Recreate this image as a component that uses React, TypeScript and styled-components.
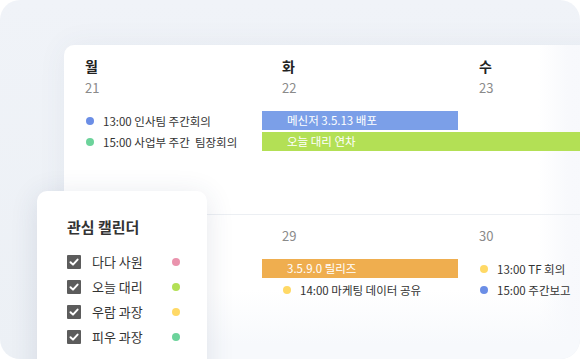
import React from "react";
import styled, { createGlobalStyle } from "styled-components";

const GlobalStyle = createGlobalStyle`
  html, body { margin: 0; padding: 0; background: #ffffff; }
  body { font-family: "Noto Sans CJK KR", "Noto Sans", sans-serif; }
  * { box-sizing: border-box; }
`;

const Frame = styled.div`
  position: relative;
  width: 580px;
  height: 359px;
  border-radius: 20px;
  overflow: hidden;
  background: linear-gradient(180deg, #f0f3f8 0%, #ecf0f5 100%);
  padding: 45px 0 0 64px;
  display: flex;
`;

const Card = styled.div`
  position: relative;
  width: 600px;
  flex-shrink: 0;
  height: 340px;
  border-top-left-radius: 10px;
  box-shadow: 0 0 30px rgba(60, 80, 120, 0.06);
  background:
    linear-gradient(180deg, rgba(247, 249, 252, 0) 72%, rgba(247, 249, 252, 1) 88%),
    linear-gradient(90deg, #ffffff 0%, #ffffff 79%, #f8f9fc 84%, #f5f7fa 100%);
  display: flex;
  flex-direction: column;
`;

const WeekRow = styled.div<{ $top: number; $divider?: boolean }>`
  padding-top: ${(p) => p.$top}px;
  height: ${(p) => (p.$divider ? "auto" : "169px")};
  border-top: ${(p) => (p.$divider ? "1px solid #eceff3" : "none")};
  display: flex;
  flex-direction: column;
`;

const HeaderGrid = styled.div`
  display: grid;
  grid-template-columns: repeat(3, 197px);
`;

const HeadCell = styled.div`
  padding-left: 21px;
  display: flex;
  flex-direction: column;
  min-height: 21px;
`;

const DayName = styled.div`
  font-size: 14px;
  line-height: 21px;
  font-weight: 700;
  color: #222;
`;

const DateNum = styled.div`
  font-size: 13px;
  line-height: 21px;
  color: #8a8a8a;
  font-weight: 400;
`;

const EventGrid = styled.div`
  margin-top: 13px;
  display: grid;
  grid-template-columns: repeat(3, 197px);
  grid-auto-rows: 21px;
`;

const Bar = styled.div<{ $color: string; $col: number; $span: number; $row: number }>`
  grid-column: ${(p) => p.$col} / span ${(p) => p.$span};
  grid-row: ${(p) => p.$row};
  margin-left: 1px;
  height: 19px;
  background: ${(p) => p.$color};
  color: #ffffff;
  font-size: 11.5px;
  line-height: 19px;
  padding-left: 25px;
  white-space: nowrap;
`;

const DotEvent = styled.div<{ $col: number; $row: number }>`
  grid-column: ${(p) => p.$col};
  grid-row: ${(p) => p.$row};
  height: 19px;
  display: flex;
  align-items: center;
  padding-left: 22px;
  gap: 9px;
  font-size: 11.5px;
  color: #333;
  white-space: nowrap;
`;

const Dot = styled.span<{ $color: string }>`
  width: 8px;
  height: 8px;
  border-radius: 50%;
  background: ${(p) => p.$color};
  flex-shrink: 0;
`;

const Popup = styled.div`
  position: absolute;
  left: 37px;
  top: 191px;
  width: 170px;
  height: 200px;
  background: #ffffff;
  border-radius: 10px;
  box-shadow: 0 4px 28px rgba(40, 60, 100, 0.12);
  padding: 26px 0 0 30px;
  z-index: 2;
`;

const PopupTitle = styled.div`
  font-size: 15px;
  font-weight: 700;
  color: #333;
  line-height: 20px;
  margin-bottom: 12px;
`;

const CalList = styled.div`
  display: flex;
  flex-direction: column;
`;

const CalItem = styled.div`
  display: grid;
  grid-template-columns: 14px 1fr 8px;
  align-items: center;
  column-gap: 11px;
  height: 25px;
  width: 113px;
  font-size: 13px;
  color: #333;
`;

const CheckBox = styled.span`
  width: 14px;
  height: 14px;
  border-radius: 1px;
  background: #5c5c5c;
  display: flex;
  align-items: center;
  justify-content: center;
`;

const Check = () => (
  <CheckBox>
    <svg width="14" height="14" viewBox="0 0 14 14">
      <polyline points="3.5,7.2 6,9.6 10.6,4.6" fill="none" stroke="#fff" strokeWidth="2" strokeLinecap="round" strokeLinejoin="round" />
    </svg>
  </CheckBox>
);

const C = {
  blue: "#6b8ee6",
  green: "#6cd39b",
  yellow: "#ffd966",
  pink: "#ea93ad",
  lime: "#b3e055",
  barBlue: "#7b9fe8",
  barLime: "#b3e055",
  barOrange: "#efae4f",
};

const calendars = [
  { name: "다다 사원", color: C.pink },
  { name: "오늘 대리", color: C.lime },
  { name: "우람 과장", color: C.yellow },
  { name: "피우 과장", color: C.green },
];

export default function App() {
  return (
    <>
      <GlobalStyle />
      <Frame>
        <Card>
          <WeekRow $top={11}>
            <HeaderGrid>
              <HeadCell>
                <DayName>월</DayName>
                <DateNum>21</DateNum>
              </HeadCell>
              <HeadCell>
                <DayName>화</DayName>
                <DateNum>22</DateNum>
              </HeadCell>
              <HeadCell>
                <DayName>수</DayName>
                <DateNum>23</DateNum>
              </HeadCell>
            </HeaderGrid>
            <EventGrid>
              <DotEvent $col={1} $row={1}>
                <Dot $color={C.blue} />
                13:00 인사팀 주간회의
              </DotEvent>
              <DotEvent $col={1} $row={2}>
                <Dot $color={C.green} />
                15:00 사업부 주간&nbsp; 팀장회의
              </DotEvent>
              <Bar $color={C.barBlue} $col={2} $span={1} $row={1}>
                메신저 3.5.13 배포
              </Bar>
              <Bar $color={C.barLime} $col={2} $span={2} $row={2}>
                오늘 대리 연차
              </Bar>
            </EventGrid>
          </WeekRow>
          <WeekRow $top={10} $divider>
            <HeaderGrid>
              <HeadCell />
              <HeadCell>
                <DateNum>29</DateNum>
              </HeadCell>
              <HeadCell>
                <DateNum>30</DateNum>
              </HeadCell>
            </HeaderGrid>
            <EventGrid>
              <Bar $color={C.barOrange} $col={2} $span={1} $row={1}>
                3.5.9.0 릴리즈
              </Bar>
              <DotEvent $col={2} $row={2}>
                <Dot $color={C.yellow} />
                14:00 마케팅 데이터 공유
              </DotEvent>
              <DotEvent $col={3} $row={1}>
                <Dot $color={C.yellow} />
                13:00 TF 회의
              </DotEvent>
              <DotEvent $col={3} $row={2}>
                <Dot $color={C.blue} />
                15:00 주간보고
              </DotEvent>
            </EventGrid>
          </WeekRow>
        </Card>
        <Popup>
          <PopupTitle>관심 캘린더</PopupTitle>
          <CalList>
            {calendars.map((c) => (
              <CalItem key={c.name}>
                <Check />
                <span>{c.name}</span>
                <Dot $color={c.color} />
              </CalItem>
            ))}
          </CalList>
        </Popup>
      </Frame>
    </>
  );
}
